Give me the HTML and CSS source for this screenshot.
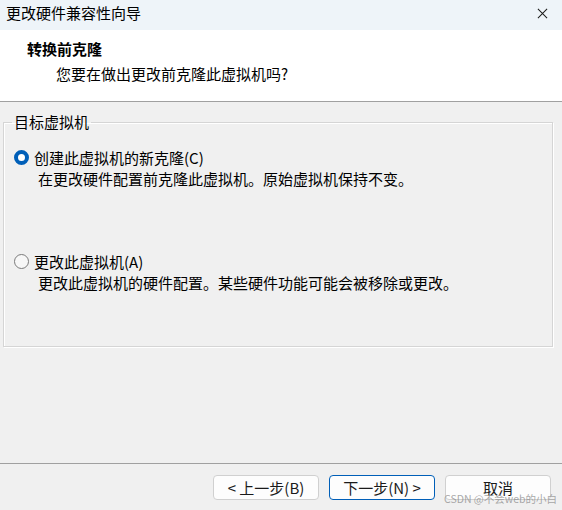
FILE: index.html
```html
<!DOCTYPE html>
<html lang="zh-CN">
<head>
  <meta charset="UTF-8">
  <title>更改硬件兼容性向导</title>
  <link rel="stylesheet" href="styles.css">
</head>
<body>
  <div class="window">
    <div class="title-bar">
      <span class="title">更改硬件兼容性向导</span>
      <svg class="close" viewBox="0 0 12 12"><path d="M1 1l10 10M11 1L1 11" stroke="#1a1a1a" stroke-width="1.1" fill="none"/></svg>
    </div>

    <div class="header">
      <div class="header-title">转换前克隆</div>
      <div class="header-sub">您要在做出更改前克隆此虚拟机吗?</div>
    </div>

    <div class="content">
      <fieldset class="group">
        <legend>目标虚拟机</legend>

        <div class="option">
          <span class="radio checked"></span>
          <span class="label">创建此虚拟机的新克隆(C)</span>
        </div>
        <div class="desc">在更改硬件配置前克隆此虚拟机。原始虚拟机保持不变。</div>

        <div class="option second">
          <span class="radio"></span>
          <span class="label">更改此虚拟机(A)</span>
        </div>
        <div class="desc">更改此虚拟机的硬件配置。某些硬件功能可能会被移除或更改。</div>
      </fieldset>
    </div>

    <div class="footer">
      <button class="btn">&lt; 上一步(B)</button>
      <button class="btn default">下一步(N) &gt;</button>
      <button class="btn">取消</button>
      <span class="watermark">CSDN @不会web的小白</span>
    </div>
  </div>
</body>
</html>
```

FILE: styles.css
```css
* {
  box-sizing: border-box;
  margin: 0;
  padding: 0;
}

body {
  font-family: "Noto Sans CJK SC", "Noto Sans", sans-serif;
  font-size: 15px;
  color: #000;
  background-color: #f0f0f0;
}

.window {
  width: 562px;
  height: 510px;
  display: flex;
  flex-direction: column;
  position: relative;
  overflow: hidden;
}

.title-bar {
  height: 30px;
  background-color: #eef4f9;
  display: flex;
  align-items: center;
  justify-content: space-between;
  padding: 0 14px 4px 6px;
}

.title {
  line-height: 20px;
}

.close {
  width: 11px;
  height: 11px;
}

.header {
  height: 72px;
  background-color: #fff;
  border-bottom: 1px solid #a0a0a0;
  padding: 8px 0 0 27px;
}

.header-title {
  font-weight: bold;
  line-height: 22px;
}

.header-sub {
  line-height: 22px;
  margin-top: 3px;
  padding-left: 29px;
}

.content {
  flex: 1;
  padding: 9px 9px 0 3px;
}

.group {
  border: 1px solid #d5d5d5;
  box-shadow: 1px 1px 0 #fff, inset 1px 1px 0 #fff;
  padding: 14px 8px 53px 8px;
}

.group legend {
  padding: 0 2px;
  line-height: 22px;
}

.option {
  display: flex;
  align-items: center;
  line-height: 21px;
  margin-left: 2px;
}

.option.second {
  margin-top: 62px;
}

.radio {
  width: 15px;
  height: 15px;
  border-radius: 50%;
  border: 1px solid #7a7a7a;
  background-color: #f7f7f7;
  margin-right: 5px;
}

.radio.checked {
  border: 4.5px solid #005fb8;
  background-color: #fff;
}

.desc {
  line-height: 21px;
  padding-left: 26px;
}

.footer {
  height: 47px;
  border-top: 1px solid #a0a0a0;
  display: flex;
  justify-content: flex-end;
  gap: 10px;
  padding: 11px 11px 0 0;
}

.btn {
  width: 106px;
  height: 25px;
  font-family: inherit;
  font-size: 15px;
  background-color: #fdfdfd;
  border: 1px solid #d0d0d0;
  border-radius: 4px;
  color: #1a1a1a;
}

.btn.default {
  border-color: #005fb8;
}

.watermark {
  position: absolute;
  left: 444px;
  top: 492px;
  font-size: 10.5px;
  line-height: 14px;
  white-space: nowrap;
  color: rgba(140, 140, 140, 0.75);
}
```
